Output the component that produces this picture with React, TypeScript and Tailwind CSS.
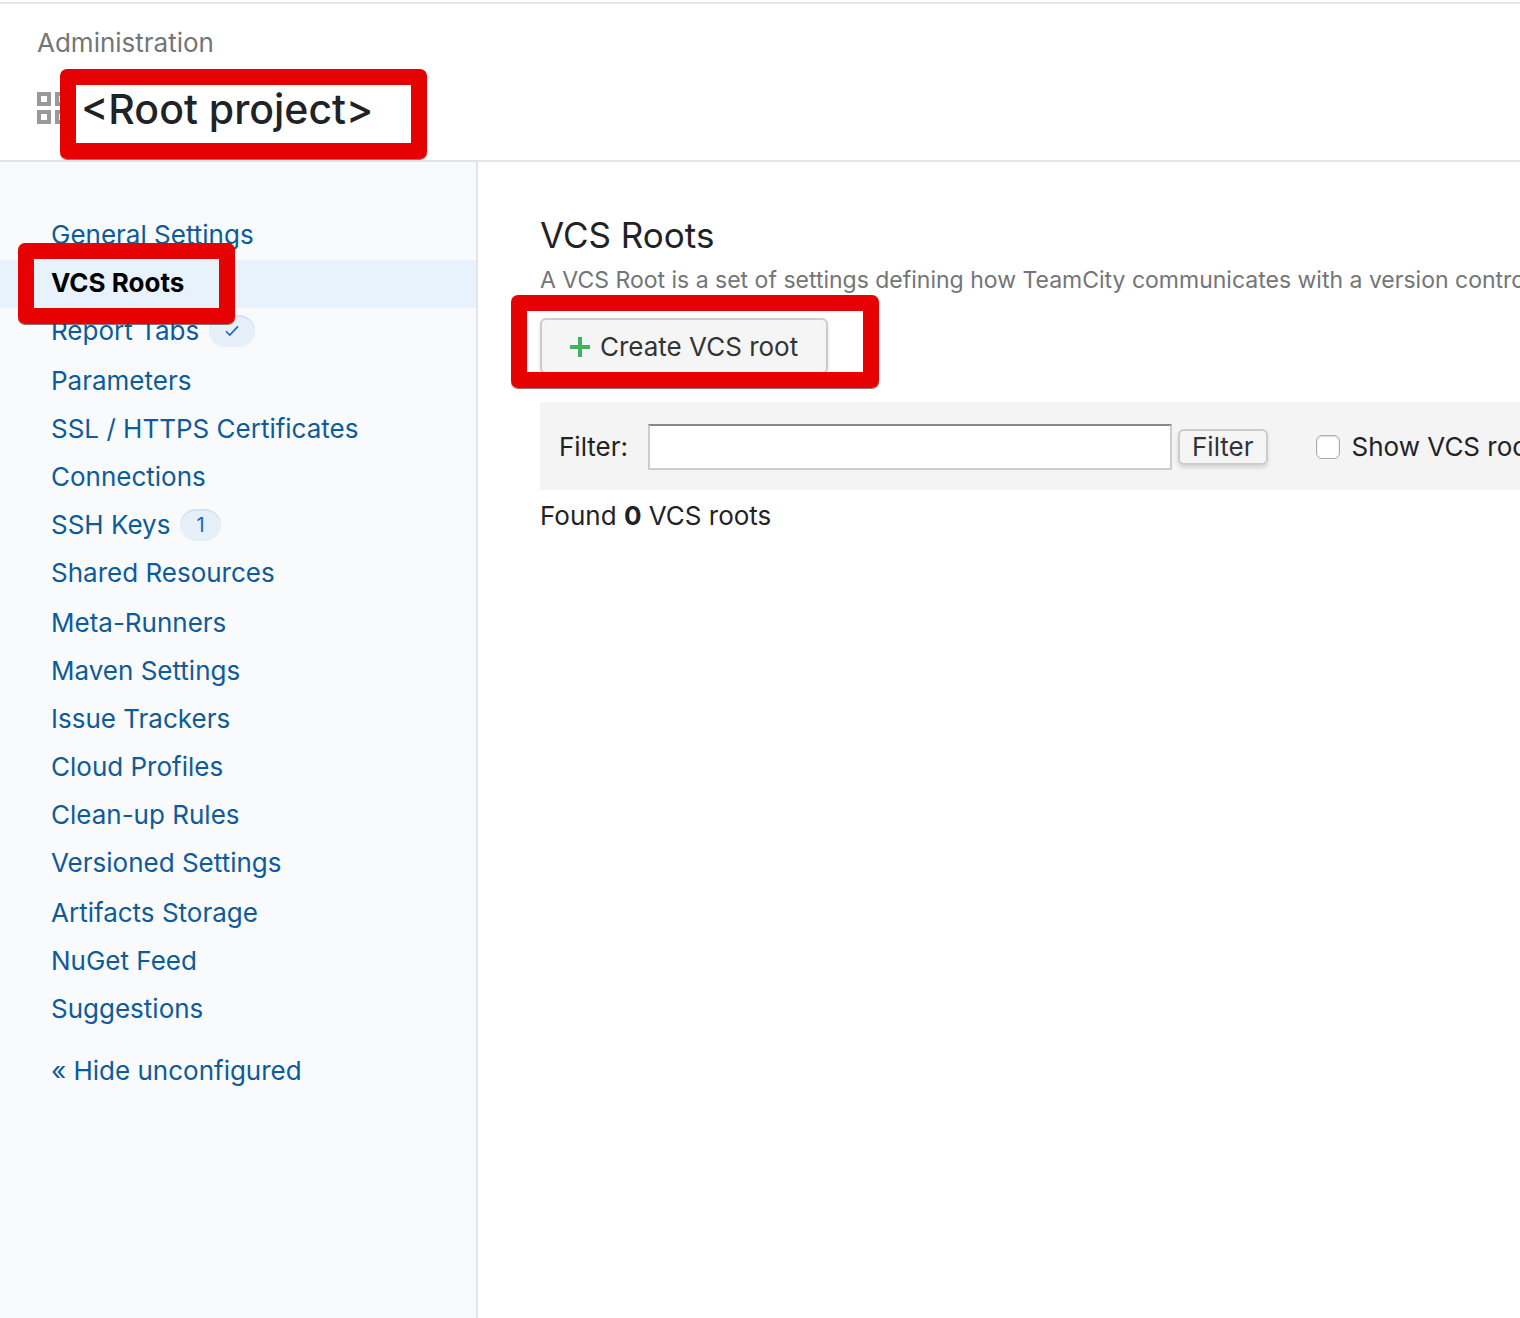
import { useState } from "react";

type NavItem = { label: string; active?: boolean; configured?: boolean; count?: number };

const navGroups: NavItem[][] = [
  [{ label: "General Settings" }, { label: "VCS Roots", active: true }, { label: "Report Tabs", configured: true }],
  [
    { label: "Parameters" },
    { label: "SSL / HTTPS Certificates" },
    { label: "Connections" },
    { label: "SSH Keys", count: 1 },
    { label: "Shared Resources" },
  ],
  [
    { label: "Meta-Runners" },
    { label: "Maven Settings" },
    { label: "Issue Trackers" },
    { label: "Cloud Profiles" },
    { label: "Clean-up Rules" },
    { label: "Versioned Settings" },
  ],
  [{ label: "Artifacts Storage" }, { label: "NuGet Feed" }, { label: "Suggestions" }],
];

function Highlight({ className }: { className: string }) {
  return (
    <span
      aria-hidden="true"
      className={`pointer-events-none absolute z-10 rounded-[7px] border-16 border-[#e60202] shadow-[0_1px_0_rgba(90,20,20,0.6)] ${className}`}
    />
  );
}

function ProjectIcon() {
  return (
    <svg width="32" height="32" viewBox="0 0 32 32" fill="none" stroke="#999" strokeWidth="4" aria-hidden="true">
      <rect x="2" y="2" width="10" height="10" />
      <rect x="20" y="2" width="10" height="10" />
      <rect x="2" y="20" width="10" height="10" />
      <rect x="20" y="20" width="10" height="10" />
    </svg>
  );
}

function Badge({ children }: { children: React.ReactNode }) {
  return (
    <span className="flex h-8 items-center rounded-full bg-[#e7eff9] px-4 text-xl leading-8 text-[#1a66c9] shadow-[inset_0_2px_0_#d3e2f5]">
      {children}
    </span>
  );
}

function NavRow({ item }: { item: NavItem }) {
  return (
    <li className={item.active ? "relative bg-[#e8f2fd]" : "relative"}>
      <a
        href="#"
        aria-current={item.active ? "page" : undefined}
        className={
          item.active
            ? "flex h-12 items-center pb-0.5 pl-[51px] font-bold text-black"
            : "flex h-12 items-center gap-2.5 pb-0.5 pl-[51px] text-[#0f5b99]"
        }
      >
        <span>{item.label}</span>
        {item.configured && (
          <Badge>
            <svg width="14" height="12" viewBox="0 0 14 12" fill="none" stroke="#1a66c9" strokeWidth="1.6" aria-label="configured">
              <path d="M1 6.2 4.8 10 13 1.4" />
            </svg>
          </Badge>
        )}
        {item.count !== undefined && <Badge>{item.count}</Badge>}
      </a>
      {item.active && <Highlight className="-top-[17px] left-[18px] h-[81px] w-[217px]" />}
    </li>
  );
}

export default function App() {
  const [filter, setFilter] = useState("");
  const [showSub, setShowSub] = useState(false);

  return (
    <div className="flex min-h-screen flex-col overflow-hidden bg-white pt-0.5 font-['Inter',sans-serif] text-[26px] leading-8 text-[#1f2326]">
      <header className="border-y-2 border-[#dfe5eb] px-[37px] pt-[23px] pb-6">
        <a href="#" className="block text-[#737577]">
          Administration
        </a>
        <div className="mt-[21px] flex h-14 items-center gap-3">
          <ProjectIcon />
          <div className="relative">
            <h1 className="pt-0.5 text-[41px] leading-14 font-medium whitespace-nowrap">&lt;Root project&gt;</h1>
            <Highlight className="-top-[10px] -left-[21px] h-[90px] w-[367px]" />
          </div>
        </div>
      </header>

      <div className="flex grow">
        <nav aria-label="Project settings" className="w-[478px] shrink-0 border-r-2 border-[#dfe5eb] bg-[#f8fafc] pt-[50px]">
          <div className="flex flex-col gap-0.5">
            {navGroups.map((group) => (
              <ul key={group[0].label}>
                {group.map((item) => (
                  <NavRow key={item.label} item={item} />
                ))}
              </ul>
            ))}
          </div>
          <a href="#" className="mt-3.5 flex h-12 items-center pb-0.5 pl-[51px] text-[#0f5b99]">
            « Hide unconfigured
          </a>
        </nav>

        <main className="min-w-0 grow overflow-hidden pt-[49px] pl-[62px] whitespace-nowrap">
          <h2 className="text-[35px] leading-12">VCS Roots</h2>
          <p className="mt-[5px] text-[23px] leading-8 text-[#737577]">
            A VCS Root is a set of settings defining how TeamCity communicates with a version control
          </p>
          <div className="relative mt-[22px] w-fit">
            <button
              type="button"
              className="flex h-14 items-center gap-2.5 rounded-md border-2 border-[#ccc] bg-[#f5f5f5] px-7 pt-0.5 text-[#333] shadow-[0_2px_4px_rgba(0,0,0,0.12)]"
            >
              <svg width="20" height="20" viewBox="0 0 20 20" fill="none" stroke="#3cb55d" strokeWidth="4" aria-hidden="true">
                <path d="M10 0v20M0 10h20" />
              </svg>
              Create VCS root
            </button>
            <Highlight className="-top-[23px] -left-[29px] h-[93px] w-[368px]" />
          </div>

          <form className="mt-7 flex h-22 items-center bg-[#f4f4f4] pt-0.5 pl-[19px]" onSubmit={(e) => e.preventDefault()}>
            <label htmlFor="filter">Filter:</label>
            <input
              id="filter"
              type="text"
              value={filter}
              onChange={(e) => setFilter(e.target.value)}
              className="ml-5 h-[46px] w-[524px] shrink-0 border-2 border-[#ccc] border-t-[#888] bg-white px-2"
            />
            <button
              type="submit"
              className="ml-1.5 h-9 rounded-md border-2 border-[#ccc] bg-[#f5f5f5] px-3 leading-8 text-[#333] shadow-[0_3px_4px_rgba(0,0,0,0.12)]"
            >
              Filter
            </button>
            <input
              id="show-sub"
              type="checkbox"
              checked={showSub}
              onChange={(e) => setShowSub(e.target.checked)}
              className="ml-12 size-6 shrink-0 appearance-none rounded-md border border-[#aaa] bg-white shadow-[inset_0_1px_2px_rgba(0,0,0,0.15)] checked:bg-[#1a66c9]"
            />
            <label htmlFor="show-sub" className="ml-3">
              Show VCS roots
            </label>
          </form>

          <p className="mt-2.5">
            Found <strong>0</strong> VCS roots
          </p>
        </main>
      </div>
    </div>
  );
}
